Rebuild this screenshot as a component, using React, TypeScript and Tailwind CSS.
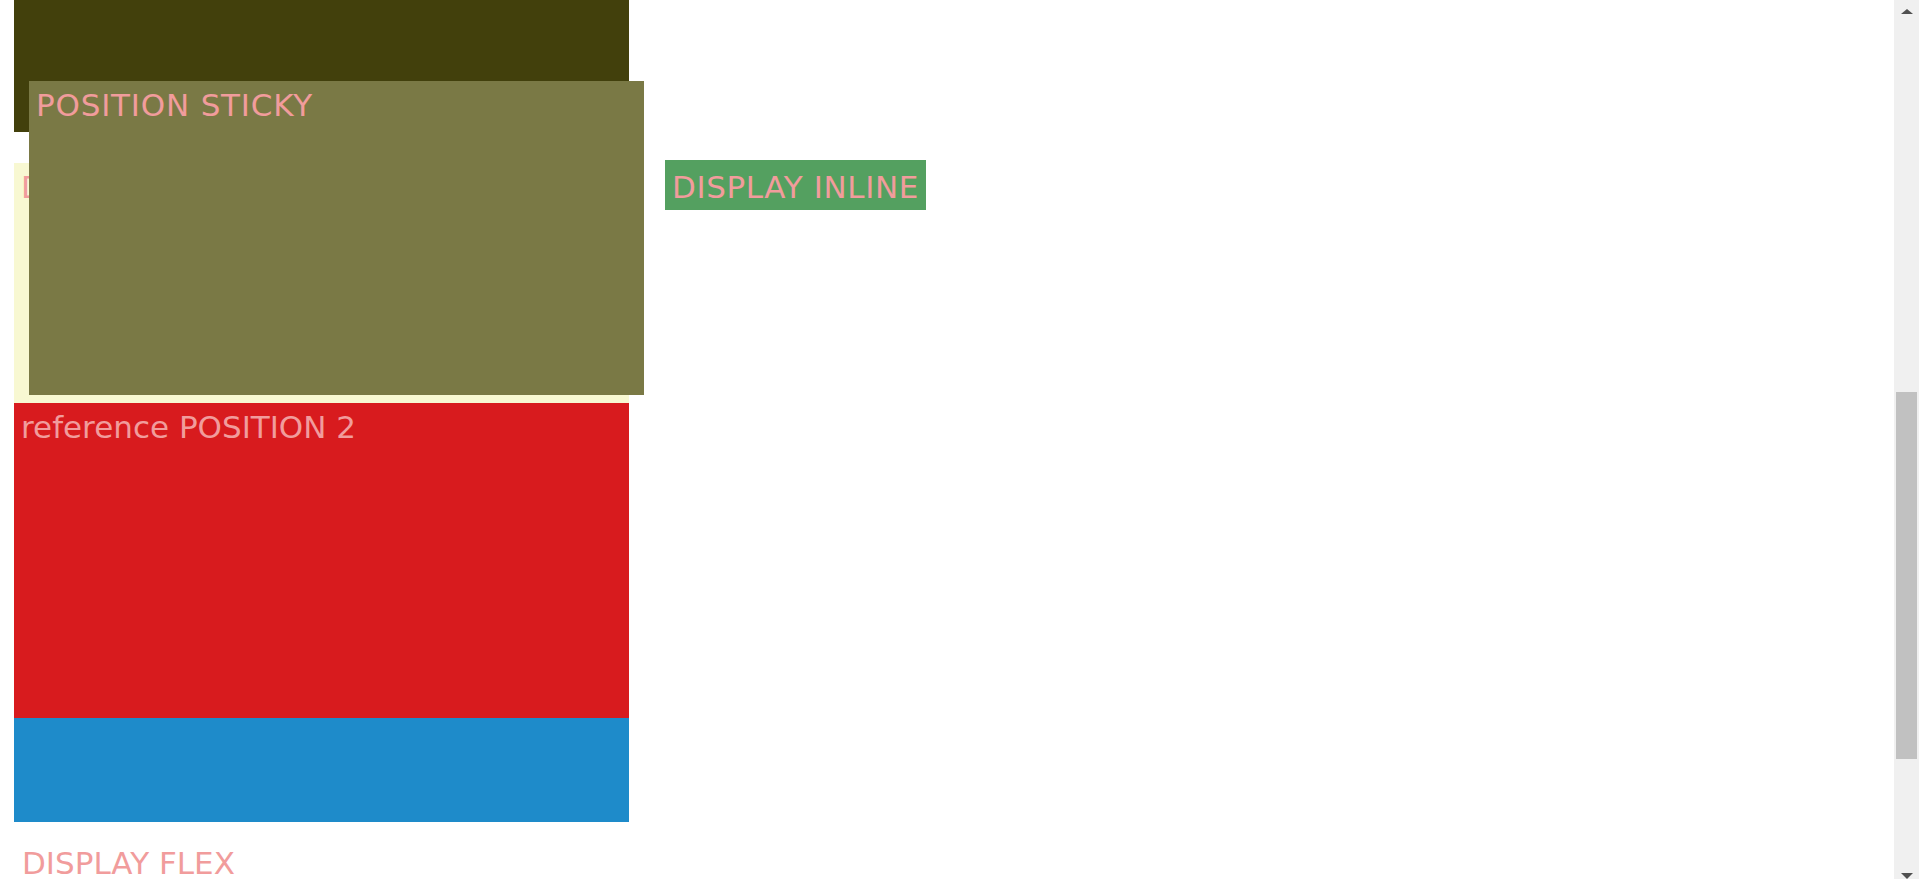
export default function App() {
  return (
    <div className="flex h-screen w-full overflow-hidden bg-white font-['DejaVu_Sans',sans-serif] text-[31px] leading-[35px] text-[#f19c9c]">
      {/* page */}
      <div className="relative flex-1 pl-[14px]">
        <div className="h-[132px] w-[615px] bg-[#42400c]" />

        <div className="mt-[28px] flex items-start">
          <div className="mt-[3px] h-[240px] w-[615px] bg-[#f8f8d2] pl-[7px] pt-[7px]">
            DISPLAY BLOCK
          </div>
          <div className="ml-[36px] bg-[#54a060] pb-[5px] pl-[7px] pr-[7px] pt-[10px] tracking-[0.6px]">
            DISPLAY INLINE
          </div>
        </div>

        <div className="h-[315px] w-[615px] bg-[#d81b1e] pl-[7px] pt-[7px]">
          reference POSITION 2
        </div>
        <div className="h-[104px] w-[615px] bg-[#1e8bca]" />

        <div className="mt-[24px] pl-[8px]">DISPLAY FLEX</div>

        {/* stuck element, sits over the blocks */}
        <div className="absolute left-[29px] top-[81px] h-[314px] w-[615px] bg-[#7a7945] pl-[7px] pt-[7px] tracking-[0.8px]">
          POSITION STICKY
        </div>
      </div>

      {/* scrollbar */}
      <div className="flex h-full w-[25px] flex-col items-center bg-[#f0f0f0]">
        <svg className="mt-[9px]" width="12" height="5" viewBox="0 0 12 5">
          <path d="M6 0L12 5H0Z" fill="#505050" />
        </svg>
        <div className="mt-[378px] h-[367px] w-[21px] bg-[#c1c1c1]" />
        <div className="flex-1" />
        <svg width="12" height="6" viewBox="0 0 12 6">
          <path d="M0 0H12L6 6Z" fill="#505050" />
        </svg>
      </div>
    </div>
  );
}
